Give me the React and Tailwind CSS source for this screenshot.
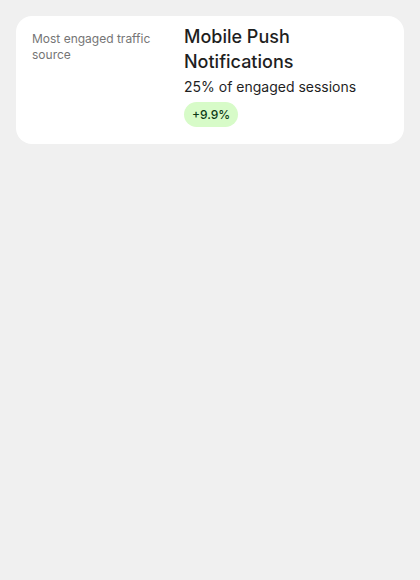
import React from 'react';

const TrafficCard = () => {
  return (
    <div className="flex gap-4 rounded-2xl bg-white px-4 pt-2 pb-[17px]">
      {/* Label column */}
      <div className="w-[136px] shrink-0 pt-[7px]">
        <p className="text-[12px] leading-4 text-[#757575]">Most engaged traffic source</p>
      </div>

      {/* Value column */}
      <div className="flex flex-col items-start">
        <h2 className="text-[18px] leading-[25px] font-medium text-[#1f1f1f]">Mobile Push Notifications</h2>
        <p className="mt-[3px] text-[14px] leading-5 text-[#1f1f1f]">25% of engaged sessions</p>
        <span className="mt-[5px] flex h-[25px] items-center rounded-full bg-[#d7fbc8] px-2 text-[12px] leading-4 font-medium text-[#0d3b17]">
          +9.9%
        </span>
      </div>
    </div>
  );
};

export default function App() {
  return (
    <div className="min-h-[580px] bg-[#f0f0f0] p-4" style={{ fontFamily: 'Inter, "Noto Sans", sans-serif' }}>
      <TrafficCard />
    </div>
  );
}
